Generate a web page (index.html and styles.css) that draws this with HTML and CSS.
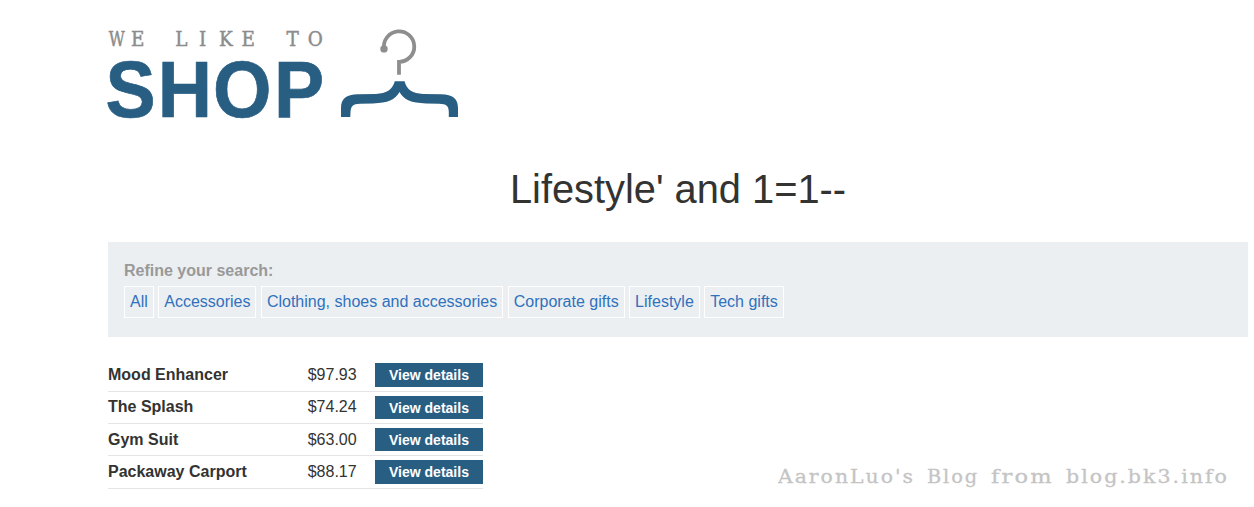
FILE: index.html
```html
<!DOCTYPE html>
<html lang="en">
<head>
<meta charset="utf-8">
<title>We Like To Shop</title>
<link rel="stylesheet" href="styles.css">
</head>
<body>
<main class="page">
  <header class="header">
    <svg class="logo" viewBox="0 0 352 90" role="img" aria-label="We like to shop">
      <g class="logo-top">
        <text transform="translate(0.7 16.5) scale(.78 1)">W</text>
        <text transform="translate(0 16.5) scale(.92 1)" x="24.9">E</text>
        <text transform="translate(0 16.5) scale(.92 1)" x="73 99 120.7 145">LIKE</text>
        <text transform="translate(0 16.5) scale(.92 1)" x="194 217">TO</text>
      </g>
      <text class="logo-main" transform="translate(0 87.7) scale(.94 1)" x="-2.6 52.8 111.8 176.6">SHOP</text>
      <path class="hook" d="M276 19.6 A15.2 15.2 0 1 1 291 32.8 V45.7"/>
      <circle class="hook-tip" cx="276" cy="19.9" r="3.7"/>
      <path class="brace" d="M286.8 52.3 H296.6 C298.5 61 305 64.5 315 64.9 L333 65.3 C345 65.5 350 70 350 79 V88 H340.8 V83 C340.8 77 338.5 74.8 331 74.7 L318 74.4 C303 74 296 71 291.5 63 C287 71 280 74 265 74.4 L252 74.7 C245 74.8 243 77 242.5 83 L242.3 88 H233 V79 C233 70 238 65.5 250 65.3 L268 64.9 C278 64.5 284.5 61 286.8 52.3 Z"/>
    </svg>
  </header>
  <h1 class="title">Lifestyle' and 1=1--</h1>
  <section class="filters">
    <label class="filters-label">Refine your search:</label>
    <nav class="filter-list">
      <a class="filter">All</a>
      <a class="filter">Accessories</a>
      <a class="filter">Clothing, shoes and accessories</a>
      <a class="filter">Corporate gifts</a>
      <a class="filter">Lifestyle</a>
      <a class="filter">Tech gifts</a>
    </nav>
  </section>
  <section class="products">
    <div class="product"><strong class="name">Mood Enhancer</strong><span class="price">$97.93</span><a class="button">View details</a></div>
    <div class="product"><strong class="name">The Splash</strong><span class="price">$74.24</span><a class="button">View details</a></div>
    <div class="product"><strong class="name">Gym Suit</strong><span class="price">$63.00</span><a class="button">View details</a></div>
    <div class="product"><strong class="name">Packaway Carport</strong><span class="price">$88.17</span><a class="button">View details</a></div>
  </section>
</main>
<svg class="watermark" viewBox="0 0 454 30">
  <text x="0" y="19" textLength="137" lengthAdjust="spacingAndGlyphs">AaronLuo's</text>
  <text x="149" y="19" textLength="52" lengthAdjust="spacingAndGlyphs">Blog</text>
  <text x="213" y="19" textLength="63" lengthAdjust="spacingAndGlyphs">from</text>
  <text x="288" y="19" textLength="163" lengthAdjust="spacingAndGlyphs">blog.bk3.info</text>
</svg>
</body>
</html>
```
FILE: styles.css
```css
* { box-sizing: border-box; }
body {
  margin: 0;
  height: 507px;
  overflow: hidden;
  background: #fff;
  color: #333332;
  font: 16px/18px "Liberation Sans", Arial, sans-serif;
}
.page { width: 1140px; margin-left: 108px; padding-top: 29px; }
.header { height: 90px; }
.logo { display: block; width: 352px; height: 90px; overflow: visible; }
.logo-top text { font: 20px "DejaVu Serif", serif; fill: #8c8c8c; stroke: #8c8c8c; stroke-width: .5px; }
.logo-main { font: bold 80px "Liberation Sans", Arial, sans-serif; fill: #295e83; stroke: #295e83; stroke-width: .7px; }
.hook { fill: none; stroke: #8e8e8e; stroke-width: 3.8; }
.hook-tip { fill: #8e8e8e; }
.brace { fill: #295e83; }
.title {
  margin: 47px 0 0;
  height: 46px;
  font-size: 39.8px;
  font-weight: 400;
  line-height: 46px;
  text-align: center;
}
.filters {
  height: 95px;
  margin-top: 30px;
  padding: 20px 16px;
  background: #ebeff2;
}
.filters-label { display: block; color: #999; font-weight: 700; }
.filter-list { display: flex; gap: 4.45px; margin-top: 6px; }
.filter {
  height: 32px;
  padding: 6px 5px;
  border: 1px solid #fff;
  color: #3071bd;
  white-space: nowrap;
}
.products { width: 375px; margin-top: 22.4px; }
.product {
  display: grid;
  grid-template-columns: 199.7px 67.3px 108px;
  align-items: center;
  height: 32.3px;
  padding-top: .2px;
  border-bottom: 1px solid #e5e5e5;
}
.button {
  height: 23.5px;
  background: #295e83;
  color: #fff;
  font-size: 14px;
  font-weight: 700;
  line-height: 24px;
  text-align: center;
}
.watermark {
  position: absolute;
  left: 778px;
  top: 464px;
  width: 454px;
  height: 30px;
}
.watermark text {
  font: 18.5px "DejaVu Serif", serif;
  letter-spacing: 1.8px;
  fill: #c4c4c4;
  stroke: #c4c4c4;
  stroke-width: .3px;
}
```
